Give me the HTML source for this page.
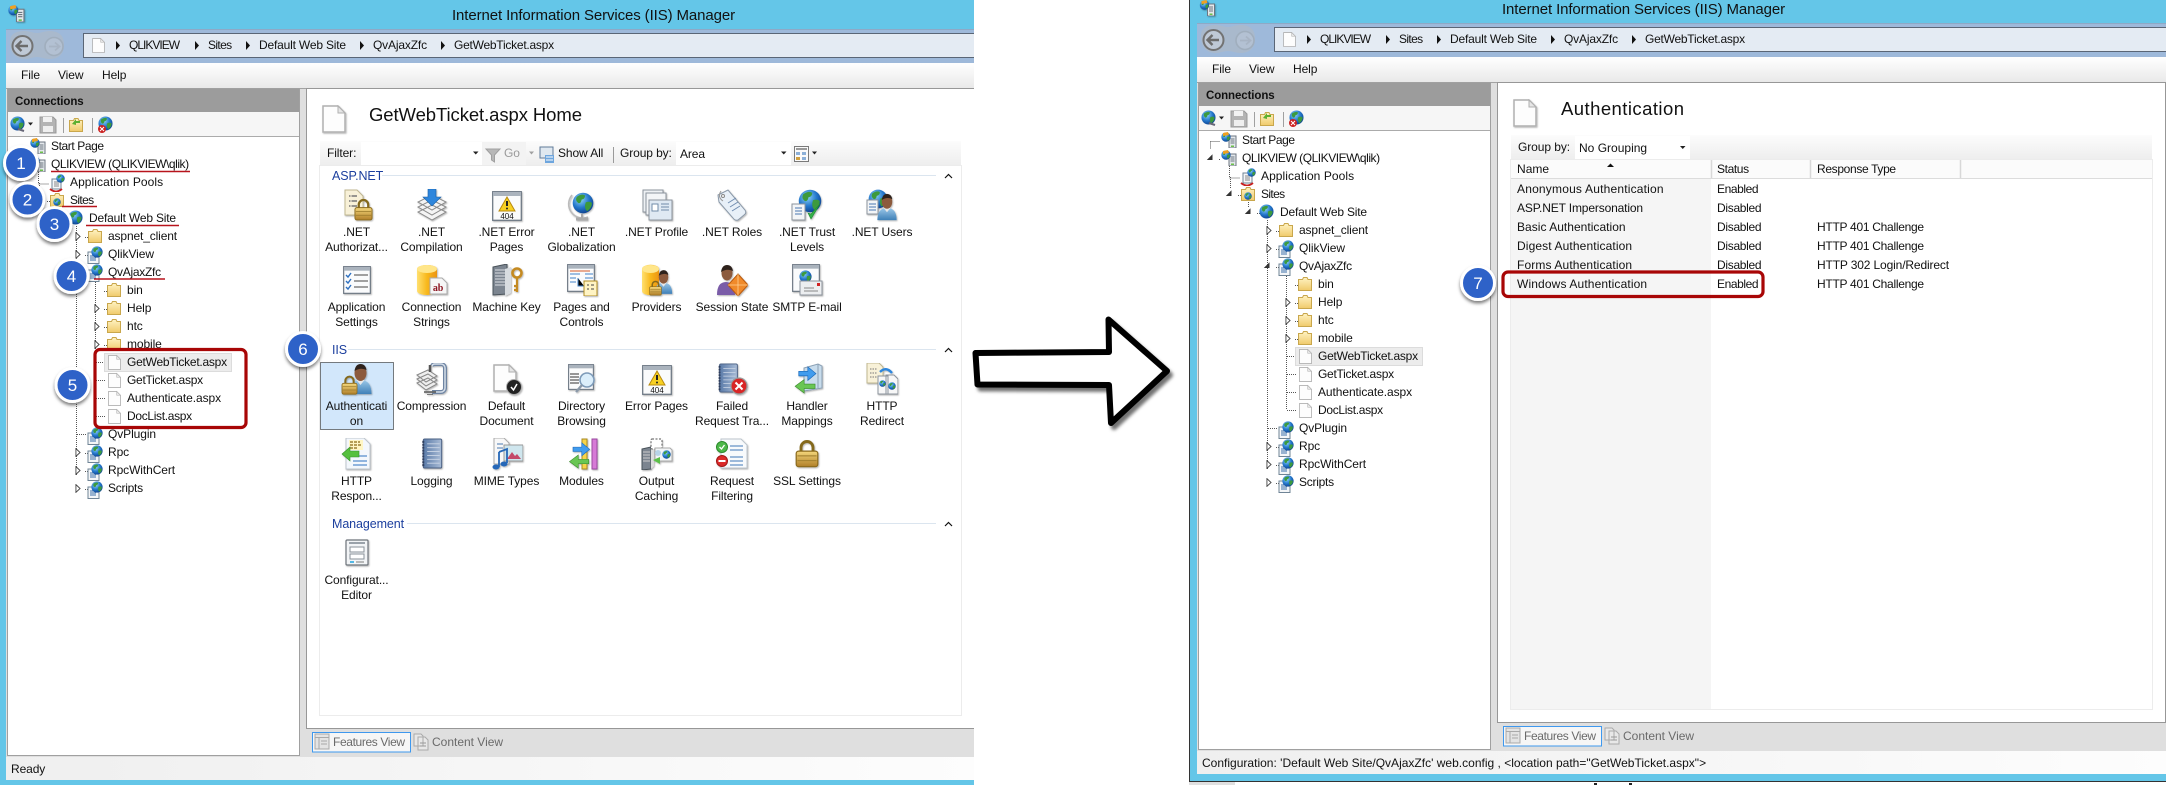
<!DOCTYPE html>
<html><head><meta charset="utf-8"><title>IIS Manager</title>
<style>
html,body{margin:0;padding:0;background:#fff;width:2166px;height:785px;overflow:hidden}
svg{display:block;position:absolute;left:0;top:0}
text{font-family:"Liberation Sans",sans-serif;font-size:12px;fill:#111;letter-spacing:-.1px}
.c text,text.c{text-anchor:middle}
.g{fill:#6a6a6a}
.h{fill:#1c3f9e}
.n{font-size:17px;fill:#fff;text-anchor:middle;letter-spacing:0}
</style></head><body>
<svg width="2166" height="785" viewBox="0 0 2166 785" xmlns="http://www.w3.org/2000/svg">
<defs>
<linearGradient id="menuG" x1="0" y1="0" x2="0" y2="1"><stop offset="0" stop-color="#fff"/><stop offset="1" stop-color="#e9e9e9"/></linearGradient>
<linearGradient id="barF" x1="0" y1="0" x2="0" y2="1"><stop offset="0" stop-color="#fcfcfc"/><stop offset="1" stop-color="#eeeeee"/></linearGradient>
<linearGradient id="stG" x1="0" y1="0" x2="1" y2="0"><stop offset="0" stop-color="#efefef"/><stop offset="1" stop-color="#fdfdfd"/></linearGradient>
<linearGradient id="gold" x1="0" y1="0" x2="0" y2="1"><stop offset="0" stop-color="#f4d77c"/><stop offset="1" stop-color="#b07f28"/></linearGradient>
<linearGradient id="body" x1="0" y1="0" x2="0" y2="1"><stop offset="0" stop-color="#9cc8e8"/><stop offset="1" stop-color="#3f80b8"/></linearGradient>
<linearGradient id="cyl" x1="0" y1="0" x2="1" y2="0"><stop offset="0" stop-color="#ffe070"/><stop offset=".5" stop-color="#f8b81c"/><stop offset="1" stop-color="#ec9410"/></linearGradient>
<linearGradient id="fold" x1="0" y1="0" x2="0" y2="1"><stop offset="0" stop-color="#fff3c4"/><stop offset="1" stop-color="#f0ca6a"/></linearGradient>
<linearGradient id="nb" x1="0" y1="0" x2="1" y2="0"><stop offset="0" stop-color="#5a7aa8"/><stop offset="1" stop-color="#a9bcd6"/></linearGradient>
<radialGradient id="glo" cx=".38" cy=".32" r=".75"><stop offset="0" stop-color="#8ed6f6"/><stop offset=".55" stop-color="#2477cc"/><stop offset="1" stop-color="#0b3c86"/></radialGradient>
<filter id="sh" x="-30%" y="-30%" width="160%" height="170%"><feDropShadow dx="0" dy="2.5" stdDeviation="1.6" flood-color="#000" flood-opacity=".5"/></filter>
<filter id="as" x="-10%" y="-15%" width="125%" height="135%"><feDropShadow dx="3" dy="4" stdDeviation="1.6" flood-color="#000" flood-opacity=".55"/></filter>
<filter id="is" x="-15%" y="-15%" width="135%" height="135%"><feDropShadow dx=".8" dy="1" stdDeviation=".7" flood-color="#000" flood-opacity=".3"/></filter>

<symbol id="globe" viewBox="0 0 32 32"><circle cx="16" cy="16" r="15" fill="url(#glo)"/><path d="M7 7q7-5 12-2q0 5-5 6q-1 6-5 5q-5-4-2-9zM20 15q6-2 9 1q0 7-7 12q-5-5-2-13z" fill="#3c9a3e"/></symbol>
<symbol id="page" viewBox="0 0 24 28"><path d="M1 1H16L23 8V27H1Z" fill="#fdfdfd" stroke="#b0b0b0" stroke-width="1.5"/><path d="M16 1V8H23Z" fill="#e6e6e6" stroke="#b0b0b0"/></symbol>
<symbol id="lock" viewBox="0 0 20 24"><path d="M5 11V7a5 5 0 0 1 10 0v4" fill="none" stroke="#84691f" stroke-width="2.4"/><rect x="1" y="10" width="18" height="13" rx="2" fill="url(#gold)" stroke="#8a6a1e"/><path d="M2 14h16M2 18h16" stroke="#9a7a2a" stroke-width=".8"/></symbol>
<symbol id="person" viewBox="0 0 24 32"><path d="M1 31q0-14 11-14t11 14z" fill="url(#body)"/><path d="M8 17l4 5 4-5z" fill="#e8e8e8"/><ellipse cx="12" cy="10" rx="6" ry="8" fill="#8c5a3c"/><path d="M6 8q1-7 6-7t6 6q-6-3-12 1z" fill="#2e241e"/></symbol>
<symbol id="win" viewBox="0 0 30 30"><rect x=".7" y=".7" width="28.6" height="28.6" fill="#fafbfc" stroke="#6f7a86" stroke-width="1.3"/><rect x="1" y="1" width="28" height="4" fill="#aab3bd"/></symbol>
<symbol id="e404" viewBox="0 0 32 32"><use href="#win" x="1" y="2" width="30" height="30"/><path d="M16 8l8 14H8z" fill="#f7d024" stroke="#b88a10"/><path d="M16 12v5" stroke="#222" stroke-width="2"/><circle cx="16" cy="19.5" r="1" fill="#222"/><text x="16" y="30" class="c" style="font-size:8px;letter-spacing:0">404</text></symbol>
<symbol id="nbk" viewBox="0 0 24 32"><rect x="3" y="1" width="19" height="30" rx="1.5" fill="url(#nb)" stroke="#4a5f82"/><path d="M7 6h13M7 10h13M7 14h13M7 18h13M7 22h13M7 26h13" stroke="#cbd6e6" stroke-width=".9"/><path d="M3 3v26" stroke="#2d3d5c" stroke-width="2" stroke-dasharray="2 1"/></symbol>
<symbol id="arrs" viewBox="0 0 32 32"><path d="M8 7h10V2l9 7.5-9 7.5v-5H8z" fill="#3f9cee" stroke="#1c68b8" stroke-width=".7"/><path d="M26 21H14v-5L4 23.5 14 31v-5h12z" fill="#69c652" stroke="#3c8c2e" stroke-width=".7"/></symbol>

<symbol id="i-netauth" viewBox="0 0 32 32"><path d="M4 1H16L22 7V26H4Z" fill="#f8f1d8" stroke="#bfb690"/><path d="M8 7h8M8 12h8M8 17h8" stroke="#777" stroke-width="1.4" stroke-dasharray="1.5 1 6 0"/><use href="#lock" x="13" y="9" width="19" height="23"/></symbol>
<symbol id="i-comp" viewBox="0 0 32 32"><path d="M16 16L30 23 16 31 2 23zM16 11L30 18 16 26 2 18zM16 6L30 13 16 21 2 13z" fill="#f4f4f4" stroke="#8a8a8a"/><path d="M12 0h8v8h5l-9 9-9-9h5z" fill="#2f86dc" stroke="#185fa8" stroke-width=".6"/></symbol>
<symbol id="i-glob" viewBox="0 0 32 32"><path d="M6 6a14 14 0 0 0 16 22" fill="none" stroke="#bbb" stroke-width="1.6"/><path d="M10 30h12" stroke="#aaa" stroke-width="3"/><path d="M16 25v5" stroke="#aaa" stroke-width="2"/><use href="#globe" x="6" y="3" width="22" height="22"/></symbol>
<symbol id="i-profile" viewBox="0 0 32 32"><rect x="2" y="1" width="20" height="22" fill="#eef1f4" stroke="#8b939c"/><rect x="5" y="4" width="20" height="22" fill="#f3f5f7" stroke="#8b939c"/><rect x="8" y="11" width="23" height="20" fill="#dfe9f3" stroke="#8b939c"/><rect x="11" y="15" width="6" height="7" fill="#fff" stroke="#6f8ca8"/><path d="M20 15h8M20 18h8M20 21h8" stroke="#6f8ca8"/></symbol>
<symbol id="i-roles" viewBox="0 0 32 32"><path d="M2 6L12 1l17 20q2 3-1 5l-6 5q-3 1-5-2L3 13z" fill="#e8f0f8" stroke="#8a98a8"/><path d="M12 14l8-5M14 18l8-5M16 22l8-5" stroke="#6f8cb0"/><path d="M5 2q-4 6 2 10" fill="none" stroke="#999"/><circle cx="7" cy="7" r="1.500" fill="#fff" stroke="#888"/></symbol>
<symbol id="i-trust" viewBox="0 0 32 32"><use href="#globe" x="7" y="0" width="24" height="24"/><rect x="1" y="15" width="13" height="16" fill="#f3f5f7" stroke="#8b939c"/><path d="M4 19h7M4 22h7M4 25h7" stroke="#4a78b0"/><path d="M17 24l3 6 9-15-9 10z" fill="#34b048" stroke="#1f8a30" stroke-width=".6"/></symbol>
<symbol id="i-users" viewBox="0 0 32 32"><use href="#globe" x="2" y="0" width="20" height="20"/><rect x="1" y="11" width="11" height="14" fill="#f3f5f7" stroke="#8b939c"/><path d="M3 15h7M3 18h7M3 21h7" stroke="#4a78b0"/><use href="#person" x="10" y="4" width="22" height="28"/></symbol>
<symbol id="i-appset" viewBox="0 0 32 32"><use href="#win" x="1" y="2" width="30" height="28"/><path d="M5 11l2 2 3-4M5 17l2 2 3-4M5 23l2 2 3-4" fill="none" stroke="#2d6fc0" stroke-width="1.4"/><path d="M13 11h14M13 17h14M13 23h14" stroke="#444"/></symbol>
<symbol id="i-conn" viewBox="0 0 32 32"><path d="M1 5a10 4 0 0 1 20 0v22a10 4 0 0 1-20 0z" fill="url(#cyl)"/><ellipse cx="11" cy="5" rx="10" ry="4" fill="#ffe68a"/><path d="M14 14H26L31 19V30H14Z" fill="#f6f6f6" stroke="#aaa"/><text x="22" y="27" class="c" style="font:bold 10px 'Liberation Serif',serif;fill:#8c1420">ab</text></symbol>
<symbol id="i-mk" viewBox="0 0 32 32"><path d="M2 3l14-3v30L2 31z" fill="#7c8590" stroke="#4a525a"/><path d="M4 6h10M4 9h10M4 12h10M4 15h10M4 18h10M4 21h10" stroke="#c8ced4" stroke-width="1.2"/><path d="M14 5l6-2v26l-6 3z" fill="#d8dce0"/><circle cx="26" cy="9" r="4.5" fill="none" stroke="#c48a20" stroke-width="2.6"/><path d="M26 13v15M26 22h-3M26 26h-3" stroke="#c48a20" stroke-width="2.2"/></symbol>
<symbol id="i-pages" viewBox="0 0 32 32"><use href="#win" x="1" y="0" width="28" height="28"/><path d="M4 10h10M4 14h6M4 18h6M12 14v8h6M19 10h8M19 14h8" stroke="#3f82c8"/><path d="M4 7h20" stroke="#d65a28"/><rect x="18" y="17" width="13" height="15" fill="#fff4c4" stroke="#b08c24"/><path d="M21 21h2M25 21h3M21 25h2M25 25h3" stroke="#444"/></symbol>
<symbol id="i-prov" viewBox="0 0 32 32"><path d="M1 5a8 4 0 0 1 17 0v22a8 4 0 0 1-17 0z" fill="url(#cyl)"/><ellipse cx="9.500" cy="5" rx="8.500" ry="4" fill="#ffe68a"/><use href="#person" x="13" y="5" width="19" height="26"/><use href="#lock" x="8" y="16" width="13" height="16"/></symbol>
<symbol id="i-sess" viewBox="0 0 32 32"><path d="M1 31q0-13 9-13t9 13z" fill="#7a5ca8"/><ellipse cx="11" cy="9" rx="5.500" ry="7.500" fill="#8c5a3c"/><path d="M5 8q1-7 6-7t6 6q-6-3-12 1z" fill="#2e241e"/><path d="M22 10L32 21 22 32 12 21z" fill="#f08a2c" stroke="#b85a10"/><path d="M22 10v22M12 21h20" stroke="#ffd090" stroke-width=".8"/></symbol>
<symbol id="i-smtp" viewBox="0 0 32 32"><use href="#win" x="1" y="0" width="28" height="28"/><use href="#globe" x="8" y="6" width="13" height="13"/><rect x="9" y="17" width="22" height="14" fill="#eceef0" stroke="#8b939c"/><rect x="26" y="19" width="3" height="3" fill="#d02020"/><path d="M13 24h10M13 27h14" stroke="#888"/></symbol>
<symbol id="i-auth" viewBox="0 0 32 32"><use href="#person" x="7" y="0" width="25" height="32"/><use href="#lock" x="0" y="12" width="17" height="20"/></symbol>
<symbol id="i-press" viewBox="0 0 32 32"><path d="M1 12l11-5 9 6-11 6zM1 16l11-5 9 6-11 6zM1 20l11-5 9 6-11 6z" fill="#eee" stroke="#888"/><path d="M16 3a3 3 0 0 1 3-2h6a4 4 0 0 1 4 4v20a4 4 0 0 1-4 4h-9" fill="none" stroke="#6e84a2" stroke-width="4"/><path d="M16 3a3 3 0 0 1 3-2h6a4 4 0 0 1 4 4v20a4 4 0 0 1-4 4h-9" fill="none" stroke="#d4dde8" stroke-width="1.500"/><path d="M8 29h12M11 32h6" stroke="#555" stroke-width="1.6"/><path d="M14 2v7" stroke="#555" stroke-width="2.500"/></symbol>
<symbol id="i-def" viewBox="0 0 32 32"><use href="#page" x="2" y="0" width="24" height="30"/><circle cx="23" cy="24" r="7.500" fill="#222" stroke="#aaa"/><path d="M20 24l2.500 3 3.500-6" fill="none" stroke="#fff" stroke-width="1.5"/></symbol>
<symbol id="i-dir" viewBox="0 0 32 32"><use href="#win" x="1" y="1" width="28" height="26"/><path d="M4 11h9M4 14h9M4 17h9M4 20h9" stroke="#333"/><circle cx="21" cy="17" r="7" fill="#dbeefb" stroke="#7d9ab8" stroke-width="1.6"/><path d="M16 22l-6 7" stroke="#8a98a8" stroke-width="2.4"/></symbol>
<symbol id="i-fail" viewBox="0 0 32 32"><use href="#nbk" x="0" y="0" width="24" height="30"/><circle cx="23" cy="23" r="8" fill="#d82828" stroke="#999" stroke-width="1.2"/><path d="M19.500 19.500l7 7M26.500 19.500l-7 7" stroke="#fff" stroke-width="2"/></symbol>
<symbol id="i-hand" viewBox="0 0 32 32"><path d="M13 5L27 1l4 2v22l-18 3z" fill="#c8dcec" stroke="#8aa0b4"/><path d="M27 1v24" stroke="#8aa0b4"/><use href="#arrs" x="0" y="2" width="30" height="29"/></symbol>
<symbol id="i-red" viewBox="0 0 32 32"><path d="M1 0H13L17 4V20H1Z" fill="#f8f1d8" stroke="#bfb690"/><path d="M4 6h7M4 10h7M4 14h7" stroke="#777" stroke-dasharray="1.5 1"/><path d="M12 13H22V31H12Z M20 12H28L32 16V31H20Z" fill="#f7f7f7" stroke="#8b939c"/><use href="#globe" x="22" y="19" width="8" height="8"/><use href="#globe" x="13" y="17" width="7" height="7"/><path d="M14 9q6-6 12 1" fill="none" stroke="#2d86dc" stroke-width="2.4"/></symbol>
<symbol id="i-resp" viewBox="0 0 32 32"><path d="M5 0H23L29 6V31H5Z" fill="#f3f7fc" stroke="#bcc4cc"/><rect x="8" y="2" width="14" height="10" fill="#fff6c4"/><path d="M9 4h10M9 7h12M9 10h8" stroke="#8a6a14" stroke-width="1.2" stroke-dasharray="3 1"/><path d="M12 18h14M12 23h14M12 27h14" stroke="#2d6fc0"/><path d="M18 13H9V9L1 16l8 7v-4h9z" fill="#54c03e" stroke="#37902a" stroke-width=".6"/></symbol>
<symbol id="i-log" viewBox="0 0 32 32"><use href="#nbk" x="4" y="0" width="24" height="31"/></symbol>
<symbol id="i-mime" viewBox="0 0 32 32"><path d="M3 0H13L18 5V26H3Z" fill="#f8f8f8" stroke="#aaa"/><path d="M6 6h6M6 10h6" stroke="#4a78b0"/><rect x="13" y="7" width="19" height="16" fill="#cfe6ee" stroke="#999"/><path d="M16 21l5-7 3 4 2-2 4 5z" fill="#c44a6a"/><path d="M8 14l8-3v14" fill="none" stroke="#2568b8" stroke-width="1.8"/><ellipse cx="5" cy="29" rx="3.500" ry="2.500" fill="#2568b8"/><ellipse cx="13" cy="26" rx="3.500" ry="2.500" fill="#2568b8"/><path d="M8 14v15" stroke="#2568b8" stroke-width="1.8"/></symbol>
<symbol id="i-mod" viewBox="0 0 32 32"><rect x="16" y="1" width="5" height="30" fill="#f7d44a" stroke="#a88a20"/><rect x="26" y="1" width="5" height="30" fill="#d67ad6" stroke="#9a4aa0"/><use href="#arrs" x="0" y="2" width="28" height="30"/></symbol>
<symbol id="i-out" viewBox="0 0 32 32"><path d="M1 11l9-2v22l-9 1z" fill="#7c8590" stroke="#4a525a"/><path d="M2 14h7M2 17h7M2 20h7M2 23h7" stroke="#ccc"/><path d="M10 9l3 2v17l-3 3z" fill="#ddd"/><rect x="10" y="1" width="11" height="10" rx="1" fill="#fff" stroke="#555" stroke-dasharray="2 1.500"/><path d="M14 10H29L31 12V23H14Z" fill="#f3f5f7" stroke="#aaa"/><use href="#globe" x="21" y="12" width="9" height="9"/><path d="M12 22l7 4v-7z" fill="#5cc04a"/><circle cx="17" cy="15" r="3" fill="#b8d4e8"/></symbol>
<symbol id="i-filt" viewBox="0 0 32 32"><path d="M5 1H25L31 7V30H5Z" fill="#f8fafc" stroke="#bcc4cc"/><path d="M14 8h13M14 12h13M14 19h13M14 23h13M14 27h13" stroke="#3f78b8"/><circle cx="6" cy="9" r="5.500" fill="#4eb84a" stroke="#2c8a2c"/><path d="M3.500 9l2 2 3-4" fill="none" stroke="#fff" stroke-width="1.3"/><circle cx="6" cy="23" r="5.500" fill="#dc2a2a" stroke="#a01818"/><path d="M2.500 23h7" stroke="#fff" stroke-width="2"/></symbol>
<symbol id="i-ssl" viewBox="0 0 32 32"><use href="#lock" x="4" y="0" width="24" height="31"/></symbol>
<symbol id="i-cfg" viewBox="0 0 32 32"><rect x="5" y="1" width="22" height="25" rx="1" fill="#f2f4f6" stroke="#6d737a" stroke-width="1.2"/><path d="M8 4h16" stroke="#9aa2aa" stroke-width="2"/><rect x="9" y="8" width="14" height="5" fill="#fff" stroke="#8a929a"/><rect x="9" y="15" width="14" height="5" fill="#fff" stroke="#8a929a"/><path d="M9 23h4" stroke="#2aa8e0" stroke-width="1.600"/><path d="M15 23h8" stroke="#aaa" stroke-width="1.600"/></symbol>

<symbol id="t-folder" viewBox="0 0 14 14"><path d="M.5 13.500V2.500h4l1-2h3.500l1 2h3.500v11z" fill="url(#fold)" stroke="#c9a74c"/></symbol>
<symbol id="t-site" viewBox="0 0 16 18"><path d="M1 6H9L12 8V17.500H1Z" fill="#f4f6f8" stroke="#6f8496"/><path d="M3 10h6M3 12h6M3 14h6" stroke="#3a6ea8"/><use href="#globe" x="4" y="0" width="12" height="12"/></symbol>
<symbol id="t-srv" viewBox="0 0 16 16"><rect x="8" y="4" width="7" height="12" fill="#e4e8ec" stroke="#6c7680"/><path d="M9.500 7h4M9.500 9h4M9.500 11h4" stroke="#6c7680"/><rect x="10" y="13.500" width="3" height="1.500" fill="#6cc04a"/><use href="#globe" x="0" y="0" width="10" height="10"/><path d="M2 1l5-1 1 3-6 1z" fill="#f0a020"/></symbol>
<symbol id="t-pool" viewBox="0 0 16 18"><rect x="3" y="5" width="9" height="10" fill="#f4f6f8" stroke="#6f8496"/><path d="M5 8h5M5 10h5M5 12h5" stroke="#888"/><use href="#globe" x="7" y="0" width="9" height="9"/><path d="M1 15q6 5 12 0" fill="none" stroke="#c82020" stroke-width="1.800"/></symbol>
<symbol id="t-sites" viewBox="0 0 14 14"><use href="#t-folder" width="14" height="14"/><use href="#globe" x="3" y="5" width="8" height="8"/></symbol>
<symbol id="exp" viewBox="0 0 6 10"><path d="M.7.7L5.300 5 .7 9.300z" fill="#fff" stroke="#444"/></symbol>

<g id="chrome">
 <rect x="6" y="29" width="970" height="34" fill="#9eb9da"/>
 <path d="M6 29.500H976" stroke="#8ea9c6"/>
 <path d="M10 42c0-9 7-11 15-11 4 0 8 2 12 2s8-2 12-2c8 0 15 3 15 13 0 12-7 15-15 15-4 0-8-2-12-2s-8 2-12 2c-8 0-15-4-15-17z" fill="#a9b9cc"/>
 <circle cx="22.500" cy="46" r="10" fill="#bfc9d6" stroke="#737373" stroke-width="2"/>
 <path d="M28 46H17M21.500 41L16.500 46l5 5" fill="none" stroke="#6c6c6c" stroke-width="2.400"/>
 <circle cx="54" cy="46.500" r="9" fill="#b3c1d3" stroke="#a0aebd" stroke-width="1.600"/>
 <path d="M49 46.500H59M55 42.500l4.500 4-4.500 4" fill="none" stroke="#a8b4c4" stroke-width="1.800"/>
 <rect x="83.500" y="33.500" width="900" height="24" fill="#e4ebf3" stroke="#5a6676"/>
 <use href="#page" x="92" y="38" width="13" height="15"/>
 <rect x="6" y="63" width="970" height="25" fill="url(#menuG)"/>
 <rect x="6" y="88" width="970" height="669" fill="#dfdfdf"/>
 <path d="M6 88.500H976" stroke="#a2a2a2"/>
 <rect x="7.500" y="88.500" width="292" height="667" fill="#fff" stroke="#a0a0a0"/>
 <rect x="8" y="89" width="291" height="23" fill="#9c9c9c"/>
 <rect x="8" y="112" width="291" height="24" fill="#f6f6f6"/>
 <path d="M8 136.500H299" stroke="#ababab"/>
 <rect x="306.500" y="88.500" width="700" height="640" fill="#fff" stroke="#979797"/>
 <rect x="6" y="757" width="970" height="23" fill="url(#stG)"/>
 <use href="#globe" x="10" y="116" width="15" height="15"/>
 <path d="M18 129l6 2" stroke="#667" stroke-width="2"/>
 <path d="M28 122.500h5l-2.500 3z" fill="#222"/>
 <path d="M40 117h13l3 3v13H40z" fill="#b4b4b4" stroke="#999"/><rect x="43" y="117" width="9" height="5" fill="#f2f2f2"/><rect x="43" y="126" width="10" height="6" fill="#efefef"/>
 <path d="M63.500 118v15M92.500 118v15" stroke="#a0a0a0"/>
 <use href="#t-folder" x="69" y="118" width="14" height="14"/><path d="M72 124l4-5v2h4v2h-4v2z" fill="#5cb030"/>
 <use href="#globe" x="98" y="116" width="15" height="15"/><circle cx="102" cy="129" r="4" fill="#cc2222"/><path d="M100 127l4 4m0-4l-4 4" stroke="#fff"/>
 <rect x="312.500" y="732.500" width="98" height="19.500" fill="#f6f6f6" stroke="#3e98ee"/>
 <g fill="none" stroke="#a9a9a9"><rect x="315" y="734" width="14" height="15" fill="#e4e4e4"/><path d="M315 737.500h14M319 737v12M321 741h6M321 744h6"/></g>
 <g fill="#e8e8e8" stroke="#aaa"><path d="M414 734h7l2 2v10h-9zM418 737h7l3 3v10h-10z"/></g><path d="M420 743h6M420 746h6" stroke="#999"/>
 <rect x="104.500" y="353.500" width="127" height="18" fill="#ececec" stroke="#dcdcdc"/>
 <path d="M116 41v9l4-4.500zM195 41v9l4-4.500zM246 41v9l4-4.500zM360 41v9l4-4.500zM441 41v9l4-4.500z" fill="#111"/>
 <g fill="none" stroke="#555" stroke-dasharray="1 1">
  <path d="M19.500 147.500v7M19.500 147.500H29M38.500 172v12H49M57.500 208v6M39.500 183v12M57.500 201v6M76.500 226v250M95.500 280v136"/>
  <path d="M28 165.500h2M47 201.500h3M66 219.500h3M85 237.500h3M85 255.500h3M85 273.500h3M104 291.500h3M104 309.500h3M104 327.500h3M104 345.500h3M96 362.500h8M96 380.500h9M96 398.500h9M96 416.500h9M77 434.500h10M85 453.500h3M85 471.500h3M85 489.500h3"/>
 </g>
 <path d="M18 167.500v-4l-4 4zM37 203.500v-4l-4 4zM56 221.500v-4l-4 4zM75 275.500v-4l-4 4z" fill="#333" stroke="#333" transform="translate(3 -2)"/>
 <use href="#exp" x="75" y="232" width="6" height="9"/><use href="#exp" x="75" y="250" width="6" height="9"/>
 <use href="#exp" x="94" y="304" width="6" height="9"/><use href="#exp" x="94" y="322" width="6" height="9"/><use href="#exp" x="94" y="340" width="6" height="9"/>
 <use href="#exp" x="75" y="448" width="6" height="9"/><use href="#exp" x="75" y="466" width="6" height="9"/><use href="#exp" x="75" y="484" width="6" height="9"/>
 <use href="#t-srv" x="30" y="138" width="16" height="16"/><use href="#t-srv" x="30" y="156" width="16" height="16"/>
 <use href="#t-pool" x="49" y="174" width="16" height="18"/><use href="#t-sites" x="50" y="193" width="14" height="14"/>
 <use href="#globe" x="68" y="210" width="15" height="15"/><use href="#t-folder" x="88" y="229" width="14" height="14"/>
 <use href="#t-site" x="87" y="246" width="16" height="18"/><use href="#t-site" x="87" y="264" width="16" height="18"/>
 <use href="#t-folder" x="107" y="283" width="14" height="14"/><use href="#t-folder" x="107" y="301" width="14" height="14"/><use href="#t-folder" x="107" y="319" width="14" height="14"/><use href="#t-folder" x="107" y="337" width="14" height="14"/>
 <use href="#page" x="108" y="354" width="13" height="17"/><use href="#page" x="108" y="372" width="13" height="17"/><use href="#page" x="108" y="390" width="13" height="17"/><use href="#page" x="108" y="408" width="13" height="17"/>
 <use href="#t-site" x="87" y="427" width="16" height="18"/><use href="#t-site" x="87" y="445" width="16" height="18"/><use href="#t-site" x="87" y="463" width="16" height="18"/><use href="#t-site" x="87" y="481" width="16" height="18"/>
</g>
</defs>

<rect width="2166" height="785" fill="#fff"/>
<!-- LEFT WINDOW -->
<rect x="0" y="0" width="974" height="785" fill="#64c6e8"/>
<use href="#chrome"/>
<g filter="url(#is)"><use href="#t-srv" x="8" y="5" width="17" height="17"/></g>
<text x="452" y="20" textLength="283" style="font-size:15px">Internet Information Services (IIS) Manager</text>

<g>
<text x="129" y="49" textLength="51">QLIKVIEW</text><text x="208" y="49" textLength="24">Sites</text><text x="259" y="49" textLength="87">Default Web Site</text><text x="373" y="49" textLength="54">QvAjaxZfc</text><text x="454" y="49" textLength="100">GetWebTicket.aspx</text>
<text x="21" y="79">File</text><text x="58" y="79">View</text><text x="102" y="79">Help</text>
<text x="15" y="105" style="font-weight:bold;font-size:11.500px">Connections</text>
<text x="51" y="150" textLength="53">Start Page</text><text x="51" y="168" textLength="138">QLIKVIEW (QLIKVIEW\qlik)</text><text x="70" y="186" textLength="93">Application Pools</text><text x="70" y="204" textLength="24">Sites</text><text x="89" y="222" textLength="87">Default Web Site</text><text x="108" y="240" textLength="69">aspnet_client</text><text x="108" y="258" textLength="46">QlikView</text><text x="108" y="276" textLength="53">QvAjaxZfc</text><text x="127" y="294">bin</text><text x="127" y="312">Help</text><text x="127" y="330">htc</text><text x="127" y="348">mobile</text><text x="127" y="366" textLength="100">GetWebTicket.aspx</text><text x="127" y="384" textLength="76">GetTicket.aspx</text><text x="127" y="402" textLength="94">Authenticate.aspx</text><text x="127" y="420" textLength="65">DocList.aspx</text><text x="108" y="438" textLength="48">QvPlugin</text><text x="108" y="456">Rpc</text><text x="108" y="474" textLength="67">RpcWithCert</text><text x="108" y="492" textLength="35">Scripts</text>
<text x="333" y="746" class="g" textLength="72">Features View</text><text x="432" y="746" class="g" textLength="71">Content View</text>
<text x="11" y="773">Ready</text>
</g>

<!-- feature panel -->
<use href="#page" x="322" y="105" width="24" height="28" filter="url(#is)"/>
<text x="369" y="121" textLength="213" style="font-size:18.500px;letter-spacing:0">GetWebTicket.aspx Home</text>
<rect x="320" y="141" width="641" height="24" fill="url(#barF)"/>
<path d="M320 165.500H961" stroke="#a6a6a6"/>
<rect x="319.500" y="165.500" width="642" height="550" fill="#fff" stroke="#ececec"/>
<text x="327" y="157">Filter:</text>
<rect x="361" y="142" width="121" height="23" fill="#fff"/>
<path d="M473 151.500h5.500l-2.750 3z" fill="#222"/>
<rect x="482" y="142" width="44" height="23" fill="#f3f3f3"/>
<path d="M486 149h14l-5.500 6v7l-3-2v-5z" fill="#b8b8b8" stroke="#a0a0a0"/>
<text x="504" y="157" class="g" style="fill:#9a9a9a">Go</text>
<path d="M529 151.500h5l-2.500 3z" fill="#a0a0a0"/>
<rect x="540" y="147" width="13" height="11" fill="#dfe8f0" stroke="#607a98"/><path d="M545 155h9v8h-9z" fill="#6ea6de"/><path d="M546 157h7M546 160h7" stroke="#fff"/>
<text x="558" y="157">Show All</text>
<path d="M613.500 147v16" stroke="#9a9a9a"/>
<text x="620" y="157">Group by:</text>
<rect x="676" y="142" width="115" height="23" fill="#fff"/>
<text x="680" y="158">Area</text>
<path d="M781 151.500h5.500l-2.750 3z" fill="#222"/>
<g><rect x="794.500" y="146.500" width="14" height="15" fill="#fafafa" stroke="#7a7a7a"/><path d="M796 149h11" stroke="#999" stroke-width="2"/><rect x="796" y="152" width="4" height="3" fill="#8cb0d8"/><rect x="802" y="152" width="4" height="3" fill="#8cb0d8"/><rect x="796" y="157" width="4" height="3" fill="#d0a040"/><rect x="802" y="157" width="4" height="3" fill="#8cb0d8"/></g>
<path d="M812 151.500h5l-2.500 3z" fill="#222"/>

<g fill="none" stroke="#dbe5ef"><path d="M382 175.500H936M348 349.500H936M407 523.500H936"/></g>
<g fill="none" stroke="#111" stroke-width="1.200"><path d="M945 178l3.500-3.500 3.500 3.500M945 352l3.500-3.500 3.500 3.500M945 526l3.500-3.500 3.500 3.500"/></g>
<text x="332" y="180" class="h" style="font-size:12.500px">ASP.NET</text>
<text x="332" y="354" class="h" style="font-size:12.500px">IIS</text>
<text x="332" y="528" class="h" style="font-size:12.500px">Management</text>

<rect x="320.500" y="362.500" width="73" height="67" fill="#d2e7fb"/>
<rect x="320.500" y="362.500" width="73" height="67" fill="none" stroke="#000" stroke-dasharray="1 1"/>

<use href="#i-netauth" x="341" y="189" width="32" height="32" filter="url(#is)"/>
<use href="#i-comp" x="416" y="189" width="32" height="32" filter="url(#is)"/>
<use href="#e404" x="491" y="189" width="32" height="32" filter="url(#is)"/>
<use href="#i-glob" x="566" y="189" width="32" height="32" filter="url(#is)"/>
<use href="#i-profile" x="641" y="189" width="32" height="32" filter="url(#is)"/>
<use href="#i-roles" x="716" y="189" width="32" height="32" filter="url(#is)"/>
<use href="#i-trust" x="791" y="189" width="32" height="32" filter="url(#is)"/>
<use href="#i-users" x="866" y="189" width="32" height="32" filter="url(#is)"/>

<use href="#i-appset" x="341" y="264" width="32" height="32" filter="url(#is)"/>
<use href="#i-conn" x="416" y="264" width="32" height="32" filter="url(#is)"/>
<use href="#i-mk" x="491" y="264" width="32" height="32" filter="url(#is)"/>
<use href="#i-pages" x="566" y="264" width="32" height="32" filter="url(#is)"/>
<use href="#i-prov" x="641" y="264" width="32" height="32" filter="url(#is)"/>
<use href="#i-sess" x="716" y="264" width="32" height="32" filter="url(#is)"/>
<use href="#i-smtp" x="791" y="264" width="32" height="32" filter="url(#is)"/>

<use href="#i-auth" x="341" y="363" width="32" height="32" filter="url(#is)"/>
<use href="#i-press" x="416" y="363" width="32" height="32" filter="url(#is)"/>
<use href="#i-def" x="491" y="363" width="32" height="32" filter="url(#is)"/>
<use href="#i-dir" x="566" y="363" width="32" height="32" filter="url(#is)"/>
<use href="#e404" x="641" y="363" width="32" height="32" filter="url(#is)"/>
<use href="#i-fail" x="716" y="363" width="32" height="32" filter="url(#is)"/>
<use href="#i-hand" x="791" y="363" width="32" height="32" filter="url(#is)"/>
<use href="#i-red" x="866" y="363" width="32" height="32" filter="url(#is)"/>

<use href="#i-resp" x="341" y="438" width="32" height="32" filter="url(#is)"/>
<use href="#i-log" x="416" y="438" width="32" height="32" filter="url(#is)"/>
<use href="#i-mime" x="491" y="438" width="32" height="32" filter="url(#is)"/>
<use href="#i-mod" x="566" y="438" width="32" height="32" filter="url(#is)"/>
<use href="#i-out" x="641" y="438" width="32" height="32" filter="url(#is)"/>
<use href="#i-filt" x="716" y="438" width="32" height="32" filter="url(#is)"/>
<use href="#i-ssl" x="791" y="438" width="32" height="32" filter="url(#is)"/>

<use href="#i-cfg" x="341" y="539" width="32" height="32" filter="url(#is)"/>

<g class="c">
<text x="356.500" y="236">.NET</text><text x="356.500" y="251">Authorizat...</text>
<text x="431.500" y="236">.NET</text><text x="431.500" y="251">Compilation</text>
<text x="506.500" y="236">.NET Error</text><text x="506.500" y="251">Pages</text>
<text x="581.500" y="236">.NET</text><text x="581.500" y="251">Globalization</text>
<text x="656.500" y="236">.NET Profile</text>
<text x="732" y="236">.NET Roles</text>
<text x="807" y="236">.NET Trust</text><text x="807" y="251">Levels</text>
<text x="882" y="236">.NET Users</text>

<text x="356.500" y="311">Application</text><text x="356.500" y="326">Settings</text>
<text x="431.500" y="311">Connection</text><text x="431.500" y="326">Strings</text>
<text x="506.500" y="311">Machine Key</text>
<text x="581.500" y="311">Pages and</text><text x="581.500" y="326">Controls</text>
<text x="656.500" y="311">Providers</text>
<text x="732" y="311">Session State</text>
<text x="807" y="311">SMTP E-mail</text>

<text x="356.500" y="410">Authenticati</text><text x="356.500" y="425">on</text>
<text x="431.500" y="410">Compression</text>
<text x="506.500" y="410">Default</text><text x="506.500" y="425">Document</text>
<text x="581.500" y="410">Directory</text><text x="581.500" y="425">Browsing</text>
<text x="656.500" y="410">Error Pages</text>
<text x="732" y="410">Failed</text><text x="732" y="425">Request Tra...</text>
<text x="807" y="410">Handler</text><text x="807" y="425">Mappings</text>
<text x="882" y="410">HTTP</text><text x="882" y="425">Redirect</text>

<text x="356.500" y="485">HTTP</text><text x="356.500" y="500">Respon...</text>
<text x="431.500" y="485">Logging</text>
<text x="506.500" y="485">MIME Types</text>
<text x="581.500" y="485">Modules</text>
<text x="656.500" y="485">Output</text><text x="656.500" y="500">Caching</text>
<text x="732" y="485">Request</text><text x="732" y="500">Filtering</text>
<text x="807" y="485">SSL Settings</text>

<text x="356.500" y="584">Configurat...</text><text x="356.500" y="599">Editor</text>
</g>

<!-- annotations left -->
<g fill="none" stroke="#b8141c" stroke-width="1.500">
<path d="M51 171.500H190M62 206.500H97M86 225.500H179M94 279H165"/>
</g>
<rect x="95" y="349.500" width="151" height="78" rx="5" fill="none" stroke="#a80606" stroke-width="3.200"/>

<g fill="#2f62c8" stroke="#fff" stroke-width="3" filter="url(#sh)">
<circle cx="21" cy="163" r="16.500"/><circle cx="27.500" cy="199.500" r="16.500"/><circle cx="54.500" cy="224" r="16.500"/><circle cx="71.500" cy="276" r="16.500"/><circle cx="72.500" cy="385" r="16.500"/><circle cx="303" cy="349" r="16.500"/>
</g>
<text x="21" y="169" class="n">1</text><text x="27.500" y="205.500" class="n">2</text><text x="54.500" y="230" class="n">3</text><text x="71.500" y="282" class="n">4</text><text x="72.500" y="391" class="n">5</text><text x="303" y="355" class="n">6</text>

<!-- clear right of left window -->
<rect x="974" y="0" width="215" height="785" fill="#fff"/>

<!-- ARROW -->
<path d="M975.500 353L1109 352 1108.500 319.500 1167 371 1111 423 1109 385 977.500 384.500Z" fill="#fff" stroke="#000" stroke-width="6" stroke-linejoin="round" filter="url(#as)"/>

<!-- RIGHT WINDOW -->
<rect x="1189" y="0" width="977" height="782" fill="#64c6e8"/>
<path d="M1189.500 0V781.500H2166" fill="none" stroke="#333"/>
<rect x="1189" y="782" width="46" height="3" fill="#e0e0e0"/>
<rect x="1594" y="783" width="3" height="2" fill="#222"/><rect x="1629" y="783" width="3" height="2" fill="#222"/>
<svg x="1190" y="0" width="976" height="781" viewBox="1190 0 976 781" style="position:static;overflow:hidden">
<g transform="translate(1191 -6)"><use href="#chrome"/></g>
</svg>
<path d="M2165.500 82V723" stroke="#979797"/>
<g filter="url(#is)"><use href="#t-srv" x="1199" y="0" width="17" height="16"/></g>
<text x="1502" y="14" textLength="283" style="font-size:15px">Internet Information Services (IIS) Manager</text>

<g transform="translate(1191 -6)">
<text x="129" y="49" textLength="51">QLIKVIEW</text><text x="208" y="49" textLength="24">Sites</text><text x="259" y="49" textLength="87">Default Web Site</text><text x="373" y="49" textLength="54">QvAjaxZfc</text><text x="454" y="49" textLength="100">GetWebTicket.aspx</text>
<text x="21" y="79">File</text><text x="58" y="79">View</text><text x="102" y="79">Help</text>
<text x="15" y="105" style="font-weight:bold;font-size:11.500px">Connections</text>
<text x="51" y="150" textLength="53">Start Page</text><text x="51" y="168" textLength="138">QLIKVIEW (QLIKVIEW\qlik)</text><text x="70" y="186" textLength="93">Application Pools</text><text x="70" y="204" textLength="24">Sites</text><text x="89" y="222" textLength="87">Default Web Site</text><text x="108" y="240" textLength="69">aspnet_client</text><text x="108" y="258" textLength="46">QlikView</text><text x="108" y="276" textLength="53">QvAjaxZfc</text><text x="127" y="294">bin</text><text x="127" y="312">Help</text><text x="127" y="330">htc</text><text x="127" y="348">mobile</text><text x="127" y="366" textLength="100">GetWebTicket.aspx</text><text x="127" y="384" textLength="76">GetTicket.aspx</text><text x="127" y="402" textLength="94">Authenticate.aspx</text><text x="127" y="420" textLength="65">DocList.aspx</text><text x="108" y="438" textLength="48">QvPlugin</text><text x="108" y="456">Rpc</text><text x="108" y="474" textLength="67">RpcWithCert</text><text x="108" y="492" textLength="35">Scripts</text>
<text x="333" y="746" class="g" textLength="72">Features View</text><text x="432" y="746" class="g" textLength="71">Content View</text>
<text x="11" y="773" textLength="504">Configuration: 'Default Web Site/QvAjaxZfc' web.config , &lt;location path="GetWebTicket.aspx"&gt;</text>
</g>

<use href="#page" x="1513" y="99" width="24" height="28" filter="url(#is)"/>
<text x="1561" y="115" textLength="123" style="font-size:18.500px;letter-spacing:0">Authentication</text>
<rect x="1511" y="135" width="641" height="24" fill="url(#barF)"/>
<path d="M1511 159.500H2152" stroke="#a6a6a6"/>
<rect x="1510.500" y="159.500" width="642" height="550" fill="#fff" stroke="#ececec"/>
<rect x="1511" y="178" width="200" height="531" fill="#f5f5f5"/>
<text x="1518" y="151" textLength="52">Group by:</text>
<rect x="1575" y="136" width="115" height="23" fill="#fff"/>
<text x="1579" y="152" textLength="68">No Grouping</text>
<path d="M1680 146h5.500l-2.750 3z" fill="#222"/>
<rect x="1511" y="160" width="641" height="18" fill="#fbfbfb"/>
<path d="M1511 178.500H2152" stroke="#dcdcdc"/>
<path d="M1711.500 160v18M1810.500 160v18M1960.500 160v18" stroke="#d8d8d8" stroke-width="1.500"/>
<text x="1517" y="173" textLength="32">Name</text><text x="1717" y="173" textLength="32">Status</text><text x="1817" y="173" textLength="79">Response Type</text>
<path d="M1607 167h7l-3.500-3.500z" fill="#111"/>
<text x="1517" y="193" textLength="146.500">Anonymous Authentication</text><text x="1717" y="193" textLength="41.500">Enabled</text>
<text x="1517" y="212" textLength="126">ASP.NET Impersonation</text><text x="1717" y="212" textLength="44.500">Disabled</text>
<text x="1517" y="231" textLength="108.500">Basic Authentication</text><text x="1717" y="231" textLength="44.500">Disabled</text><text x="1817" y="231" textLength="107">HTTP 401 Challenge</text>
<text x="1517" y="250" textLength="115">Digest Authentication</text><text x="1717" y="250" textLength="44.500">Disabled</text><text x="1817" y="250" textLength="107">HTTP 401 Challenge</text>
<text x="1517" y="269" textLength="115">Forms Authentication</text><text x="1717" y="269" textLength="44.500">Disabled</text><text x="1817" y="269" textLength="132">HTTP 302 Login/Redirect</text>
<text x="1517" y="288" textLength="130">Windows Authentication</text><text x="1717" y="288" textLength="41.500">Enabled</text><text x="1817" y="288" textLength="107">HTTP 401 Challenge</text>
<rect x="1503" y="272" width="260" height="24.500" rx="5" fill="none" stroke="#a80606" stroke-width="3.200"/>
<circle cx="1478" cy="283" r="16.500" fill="#2f62c8" stroke="#fff" stroke-width="3" filter="url(#sh)"/>
<text x="1478" y="289" class="n">7</text>
</svg>
</body></html>
